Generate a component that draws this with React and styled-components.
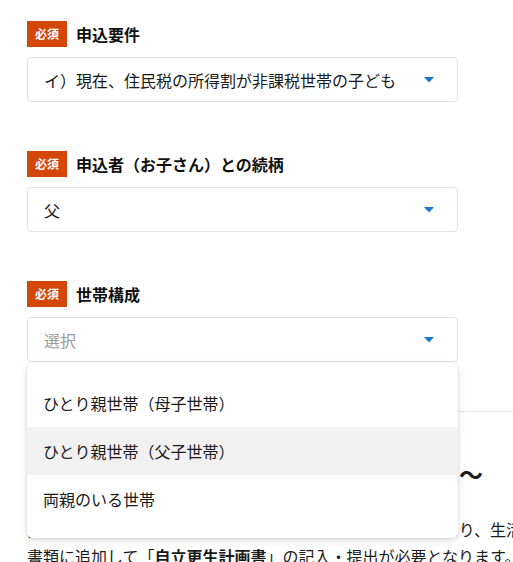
import React from 'react';
import styled, { createGlobalStyle } from 'styled-components';

const GlobalStyle = createGlobalStyle`
  html, body {
    margin: 0;
    padding: 0;
    background: #fff;
    overflow: hidden;
  }
  body {
    font-family: "Noto Sans CJK JP", "Noto Sans", sans-serif;
    color: #1a1a1a;
  }
`;

const PageStyle = styled.div`
  padding: 21px 0 0 27px;
`;

const FieldStyle = styled.div`
  position: relative;
  z-index: ${(props) => (props.$open ? 5 : 1)};
  width: 431px;
  margin-bottom: 49px;
`;

const LabelRowStyle = styled.div`
  display: flex;
  align-items: center;
  gap: 9px;
  height: 26px;
`;

const BadgeStyle = styled.span`
  display: flex;
  align-items: center;
  justify-content: center;
  width: 40px;
  height: 26px;
  background: #d4470b;
  color: #fff;
  font-size: 12px;
  font-weight: 700;
  line-height: 1;
`;

const LabelStyle = styled.span`
  font-size: 16px;
  font-weight: 700;
  color: #111;
`;

const SelectStyle = styled.div`
  box-sizing: border-box;
  display: flex;
  align-items: center;
  justify-content: space-between;
  height: 45px;
  margin-top: 10px;
  padding: 0 23px 0 16px;
  border: 1px solid #e2e2e2;
  border-radius: 4px;
  background: #fff;
  font-size: 16px;
  color: ${(props) => (props.$placeholder ? '#9a9a9a' : '#1a1a1a')};
`;

const MenuStyle = styled.ul`
  position: absolute;
  top: calc(100% + 1px);
  left: 0;
  right: 0;
  z-index: 2;
  margin: 0;
  padding: 16px 0 15px;
  list-style: none;
  background: #fff;
  border-radius: 6px;
  box-shadow: 0 1px 3px rgba(0, 0, 0, 0.12), 0 3px 10px rgba(0, 0, 0, 0.1);
`;

const OptionStyle = styled.li`
  display: flex;
  align-items: center;
  height: 48px;
  padding-left: 16px;
  font-size: 16px;
  color: #1a1a1a;
  background: ${(props) => (props.$active ? '#f1f1f1' : 'transparent')};
`;

const SectionStyle = styled.section`
  position: relative;
  z-index: 0;
  width: 560px;
  border-top: 1px solid #e6e6e6;
`;

const HeadingStyle = styled.h2`
  margin: 0;
  padding-top: 44px;
  font-size: 24px;
  font-weight: 700;
  line-height: 36px;
  white-space: nowrap;
`;

const ParagraphStyle = styled.p`
  margin: 24px 0 0;
  font-size: 16px;
  line-height: 27px;
  white-space: nowrap;
  strong {
    font-weight: 700;
  }
`;

// Components
const Arrow = function () {
  return (
    <svg width="10" height="6" viewBox="0 0 10 6">
      <path d="M0 0H10L5 5.5Z" fill="#1a78cf" />
    </svg>
  );
};

const Field = function (props) {
  const { label, value, placeholder, children } = props;
  return (
    <FieldStyle $open={!!children}>
      <LabelRowStyle>
        <BadgeStyle>必須</BadgeStyle>
        <LabelStyle>{label}</LabelStyle>
      </LabelRowStyle>
      <SelectStyle $placeholder={!!placeholder}>
        <span>{value || placeholder}</span>
        <Arrow />
      </SelectStyle>
      {children}
    </FieldStyle>
  );
};

const options = ['ひとり親世帯（母子世帯）', 'ひとり親世帯（父子世帯）', '両親のいる世帯'];

export default function App() {
  return (
    <PageStyle>
      <GlobalStyle />
      <Field label="申込要件" value="イ）現在、住民税の所得割が非課税世帯の子ども" />
      <Field label="申込者（お子さん）との続柄" value="父" />
      <Field label="世帯構成" placeholder="選択">
        <MenuStyle>
          {options.map((option, i) => (
            <OptionStyle key={option} $active={i === 1}>
              {option}
            </OptionStyle>
          ))}
        </MenuStyle>
      </Field>
      <SectionStyle>
        <HeadingStyle>〜住民税課税世帯で生計が困難な方々へ〜</HeadingStyle>
        <ParagraphStyle>
          前年の所得に比べ今年の所得が大きく減少する等の事情により、生活が困難な場合は、
          <br />
          書類に追加して「<strong>自立更生計画書</strong>」の記入・提出が必要となります。
        </ParagraphStyle>
      </SectionStyle>
    </PageStyle>
  );
}
